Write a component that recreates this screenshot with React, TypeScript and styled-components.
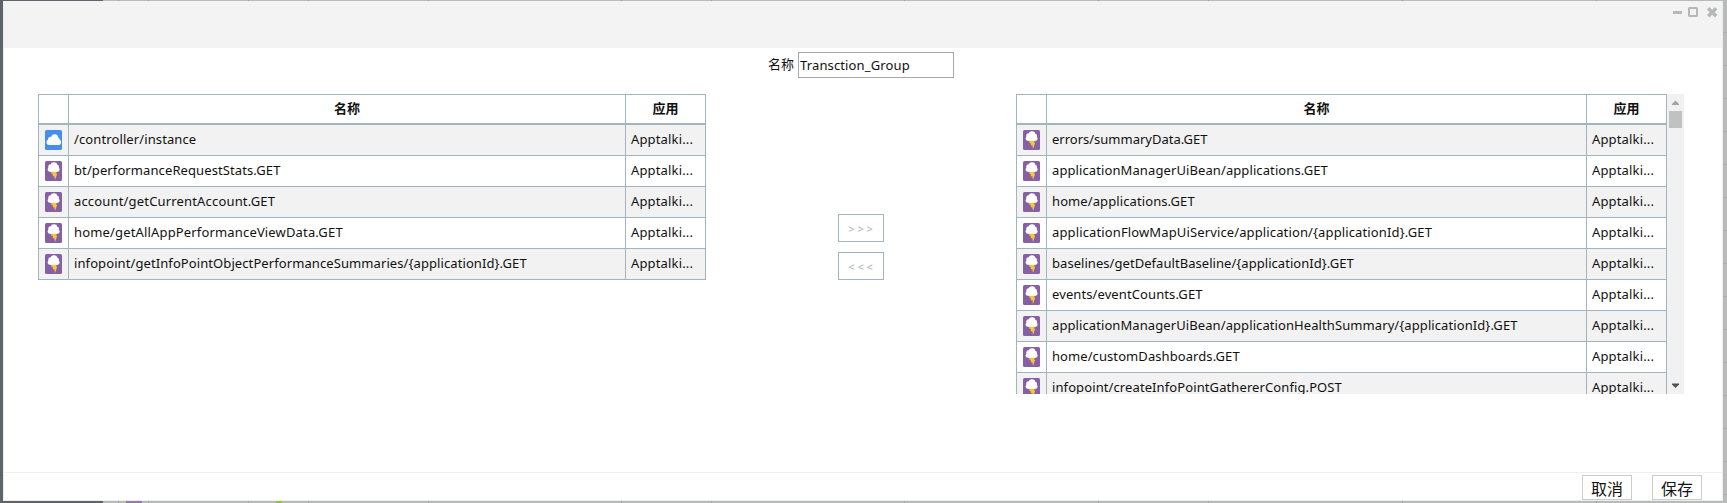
import React from 'react';
import styled, { createGlobalStyle, css } from 'styled-components';

const Global = createGlobalStyle`
  * { box-sizing: border-box; }
  body {
    margin: 0;
    overflow: hidden;
    font-family: 'Noto Sans', 'Noto Sans CJK SC', sans-serif;
    font-size: 13px;
    color: #111;
  }
`;

const columnEdges = [118, 148, 248, 308, 428, 621, 711, 904, 1098, 1208, 1402, 1596];

const Backdrop = styled.div`
  position: relative;
  width: 1727px;
  height: 503px;
  padding: 1px 4px 2px 3px;
  background:
    linear-gradient(#5f6468, #5f6468) 0 0 / 103px 100% no-repeat,
    ${columnEdges.map(x => `linear-gradient(#9aa5a9, #9aa5a9) ${x}px 0 / 1px 100% no-repeat`).join(',')},
    repeating-linear-gradient(transparent 0 32px, #a7b0b3 32px 33px) 0 0,
    #b9bbbb;
`;

const Speck = styled.i<{ $x: number; $w: number; $color: string }>`
  position: absolute;
  bottom: 0;
  left: ${p => p.$x}px;
  width: ${p => p.$w}px;
  height: 2px;
  background: ${p => p.$color};
`;

const Dialog = styled.div`
  display: flex;
  flex-direction: column;
  height: 500px;
  background: #fff;
  border: solid #ededed;
  border-width: 0 1px 1px;
`;

const TitleBar = styled.header`
  display: flex;
  justify-content: flex-end;
  height: 47px;
  padding: 5px 4px 0 0;
  background: #f3f3f3;
`;

const NameRow = styled.label`
  display: flex;
  gap: 4px;
  height: 26px;
  line-height: 24px;
  margin: 4px 0 16px 764px;
`;

const NameInput = styled.input`
  width: 156px;
  height: 26px;
  padding: 0 1px;
  border: 1px solid #a9a9a9;
  font: inherit;
  letter-spacing: 0.13px;
  color: inherit;
  outline: none;
`;

const Body = styled.main`
  display: flex;
  align-items: flex-start;
  flex: 1;
  padding-left: 34px;
`;

const Grid = styled.div<{ $name: number }>`
  --cols: 29px ${p => p.$name}px 79px;
  width: ${p => p.$name + 112}px;
  flex: none;
  border: 1px solid #a2b5bf;
`;

const Row = styled.div`
  display: grid;
  grid-template-columns: var(--cols);
  column-gap: 1px;
  height: 31px;
  border-bottom: 1px solid #a2b5bf;
  background: #fff;
  &:nth-child(even) { background: #f2f2f2; }
  &:last-child { height: 30px; border-bottom: 0; }
`;

const HeadRow = styled(Row)`
  height: 30px;
  border-bottom-width: 2px;
  font-weight: 700;
`;

const Cell = styled.div<{ $center?: boolean; $tracking?: number }>`
  min-width: 0;
  line-height: 29px;
  padding-left: 5px;
  white-space: nowrap;
  letter-spacing: ${p => p.$tracking ?? 0}px;
  & + & { box-shadow: -1px 0 #a2b5bf; }
  ${p => p.$center && css`
    padding: 0;
    line-height: 27px;
    text-align: center;
  `}
`;

const IconCell = styled(Cell)`
  padding: 5px 0 0 6px;
  line-height: 0;
`;

const Transfer = styled.div`
  display: flex;
  flex-direction: column;
  gap: 10px;
  width: 46px;
  margin: 120px 132px 0;
`;

const MoveButton = styled.button`
  width: 46px;
  height: 28px;
  padding: 2px 0 0;
  border: 1px solid #a2b5bf;
  background: #fff;
  color: #a2b5bf;
  font: 11px/24px 'Noto Sans', sans-serif;
  letter-spacing: 2.8px;
  text-indent: 2px;
`;

const ScrollArea = styled.div`
  display: flex;
  height: 300px;
  overflow: hidden;
`;

const ScrollBar = styled.div`
  display: flex;
  flex-direction: column;
  align-items: center;
  width: 17px;
  height: 300px;
  background: #f1f1f1;
`;

const Thumb = styled.div`
  width: 13px;
  height: 17px;
  margin-bottom: auto;
  background: #c1c1c1;
`;

const Footer = styled.footer`
  display: flex;
  justify-content: flex-end;
  gap: 20px;
  height: 28px;
  padding: 2px 20px 0 0;
  border-top: 1px solid #f0f0f0;
`;

const FooterButton = styled.button`
  width: 50px;
  height: 25px;
  padding: 2px 0 0;
  border: 1px solid #ccc;
  background: #fff;
  color: #111;
  font: 16px/21px 'Noto Sans CJK SC', sans-serif;
`;

const Storm = () => (
  <svg width="17" height="20" viewBox="0 0 17 20">
    <rect width="17" height="20" rx="1.5" fill="#8660a4" />
    <path d="M6.5 9.5h5.300l-.6 3.300h1L10 19l-.8-4.200-1.200 1-.4-3H6.200z" fill="#f9c53c" />
    <g fill="#fff">
      <circle cx="9" cy="4.700" r="3.400" />
      <circle cx="5.600" cy="5.600" r="2.300" />
      <circle cx="12" cy="5.800" r="2" />
      <circle cx="5" cy="8.400" r="2.400" />
      <circle cx="12.300" cy="8.500" r="2.300" />
      <rect x="5" y="5" width="7.500" height="5.800" />
    </g>
  </svg>
);

const Cloud = () => (
  <svg width="17" height="20" viewBox="0 0 17 20">
    <rect width="17" height="20" rx="1.5" fill="#478dee" />
    <g fill="#fff">
      <circle cx="9.700" cy="7.800" r="3.500" />
      <circle cx="5.600" cy="9.200" r="2.500" />
      <circle cx="4.200" cy="12.300" r="2.700" />
      <circle cx="13.300" cy="12.200" r="2.800" />
      <circle cx="12.500" cy="9.700" r="2.200" />
      <rect x="4.200" y="8.500" width="9" height="6.500" />
    </g>
  </svg>
);

const WindowControls = () => (
  <svg width="48" height="14" viewBox="0 0 48 14" fill="none" stroke="#b7b7b7">
    <path d="M3 6.500h9" strokeWidth="3" />
    <rect x="19" y="2" width="8" height="8" rx=".5" strokeWidth="2" />
    <path d="M38.200 2.200l8 8M46.200 2.200l-8 8" strokeWidth="3.400" />
  </svg>
);

const Arrow = ({ down = false }: { down?: boolean }) => (
  <svg width="17" height="17" viewBox="0 0 17 17">
    <path d={down ? 'M5 6.500h7v1L8.500 11 5 7.500z' : 'M5 11h7v-1L8.500 6.500 5 10z'} fill={down ? '#505050' : '#a3a3a3'} />
  </svg>
);

type Transaction = { name: string; tracking: number };

const selected: Transaction[] = [
  { name: '/controller/instance', tracking: 0.11 },
  { name: 'bt/performanceRequestStats.GET', tracking: 0.1 },
  { name: 'account/getCurrentAccount.GET', tracking: 0.17 },
  { name: 'home/getAllAppPerformanceViewData.GET', tracking: 0.16 },
  { name: 'infopoint/getInfoPointObjectPerformanceSummaries/{applicationId}.GET', tracking: 0.09 },
];

const available: Transaction[] = [
  { name: 'errors/summaryData.GET', tracking: 0 },
  { name: 'applicationManagerUiBean/applications.GET', tracking: 0.1 },
  { name: 'home/applications.GET', tracking: 0.1 },
  { name: 'applicationFlowMapUiService/application/{applicationId}.GET', tracking: 0.13 },
  { name: 'baselines/getDefaultBaseline/{applicationId}.GET', tracking: 0.05 },
  { name: 'events/eventCounts.GET', tracking: 0.1 },
  { name: 'applicationManagerUiBean/applicationHealthSummary/{applicationId}.GET', tracking: 0.09 },
  { name: 'home/customDashboards.GET', tracking: 0.08 },
  { name: 'infopoint/createInfoPointGathererConfig.POST', tracking: 0.1 },
];

const TransactionTable = ({ items, nameWidth }: { items: Transaction[]; nameWidth: number }) => (
  <Grid $name={nameWidth}>
    <HeadRow>
      <Cell />
      <Cell $center>名称</Cell>
      <Cell $center>应用</Cell>
    </HeadRow>
    {items.map(({ name, tracking }) => (
      <Row key={name}>
        <IconCell>{name.startsWith('/') ? <Cloud /> : <Storm />}</IconCell>
        <Cell $tracking={tracking}>{name}</Cell>
        <Cell $tracking={0.15}>Apptalki...</Cell>
      </Row>
    ))}
  </Grid>
);

export default function App() {
  return (
    <Backdrop>
      <Global />
      <Speck $x={126} $w={16} $color="#937ba6" />
      <Speck $x={276} $w={6} $color="#84c53c" />
      <Dialog>
        <TitleBar><WindowControls /></TitleBar>
        <NameRow>名称<NameInput defaultValue="Transction_Group" /></NameRow>
        <Body>
          <TransactionTable items={selected} nameWidth={556} />
          <Transfer>
            <MoveButton>&gt;&gt;&gt;</MoveButton>
            <MoveButton>&lt;&lt;&lt;</MoveButton>
          </Transfer>
          <ScrollArea>
            <TransactionTable items={available} nameWidth={539} />
            <ScrollBar><Arrow /><Thumb /><Arrow down /></ScrollBar>
          </ScrollArea>
        </Body>
        <Footer>
          <FooterButton>取消</FooterButton>
          <FooterButton>保存</FooterButton>
        </Footer>
      </Dialog>
    </Backdrop>
  );
}
